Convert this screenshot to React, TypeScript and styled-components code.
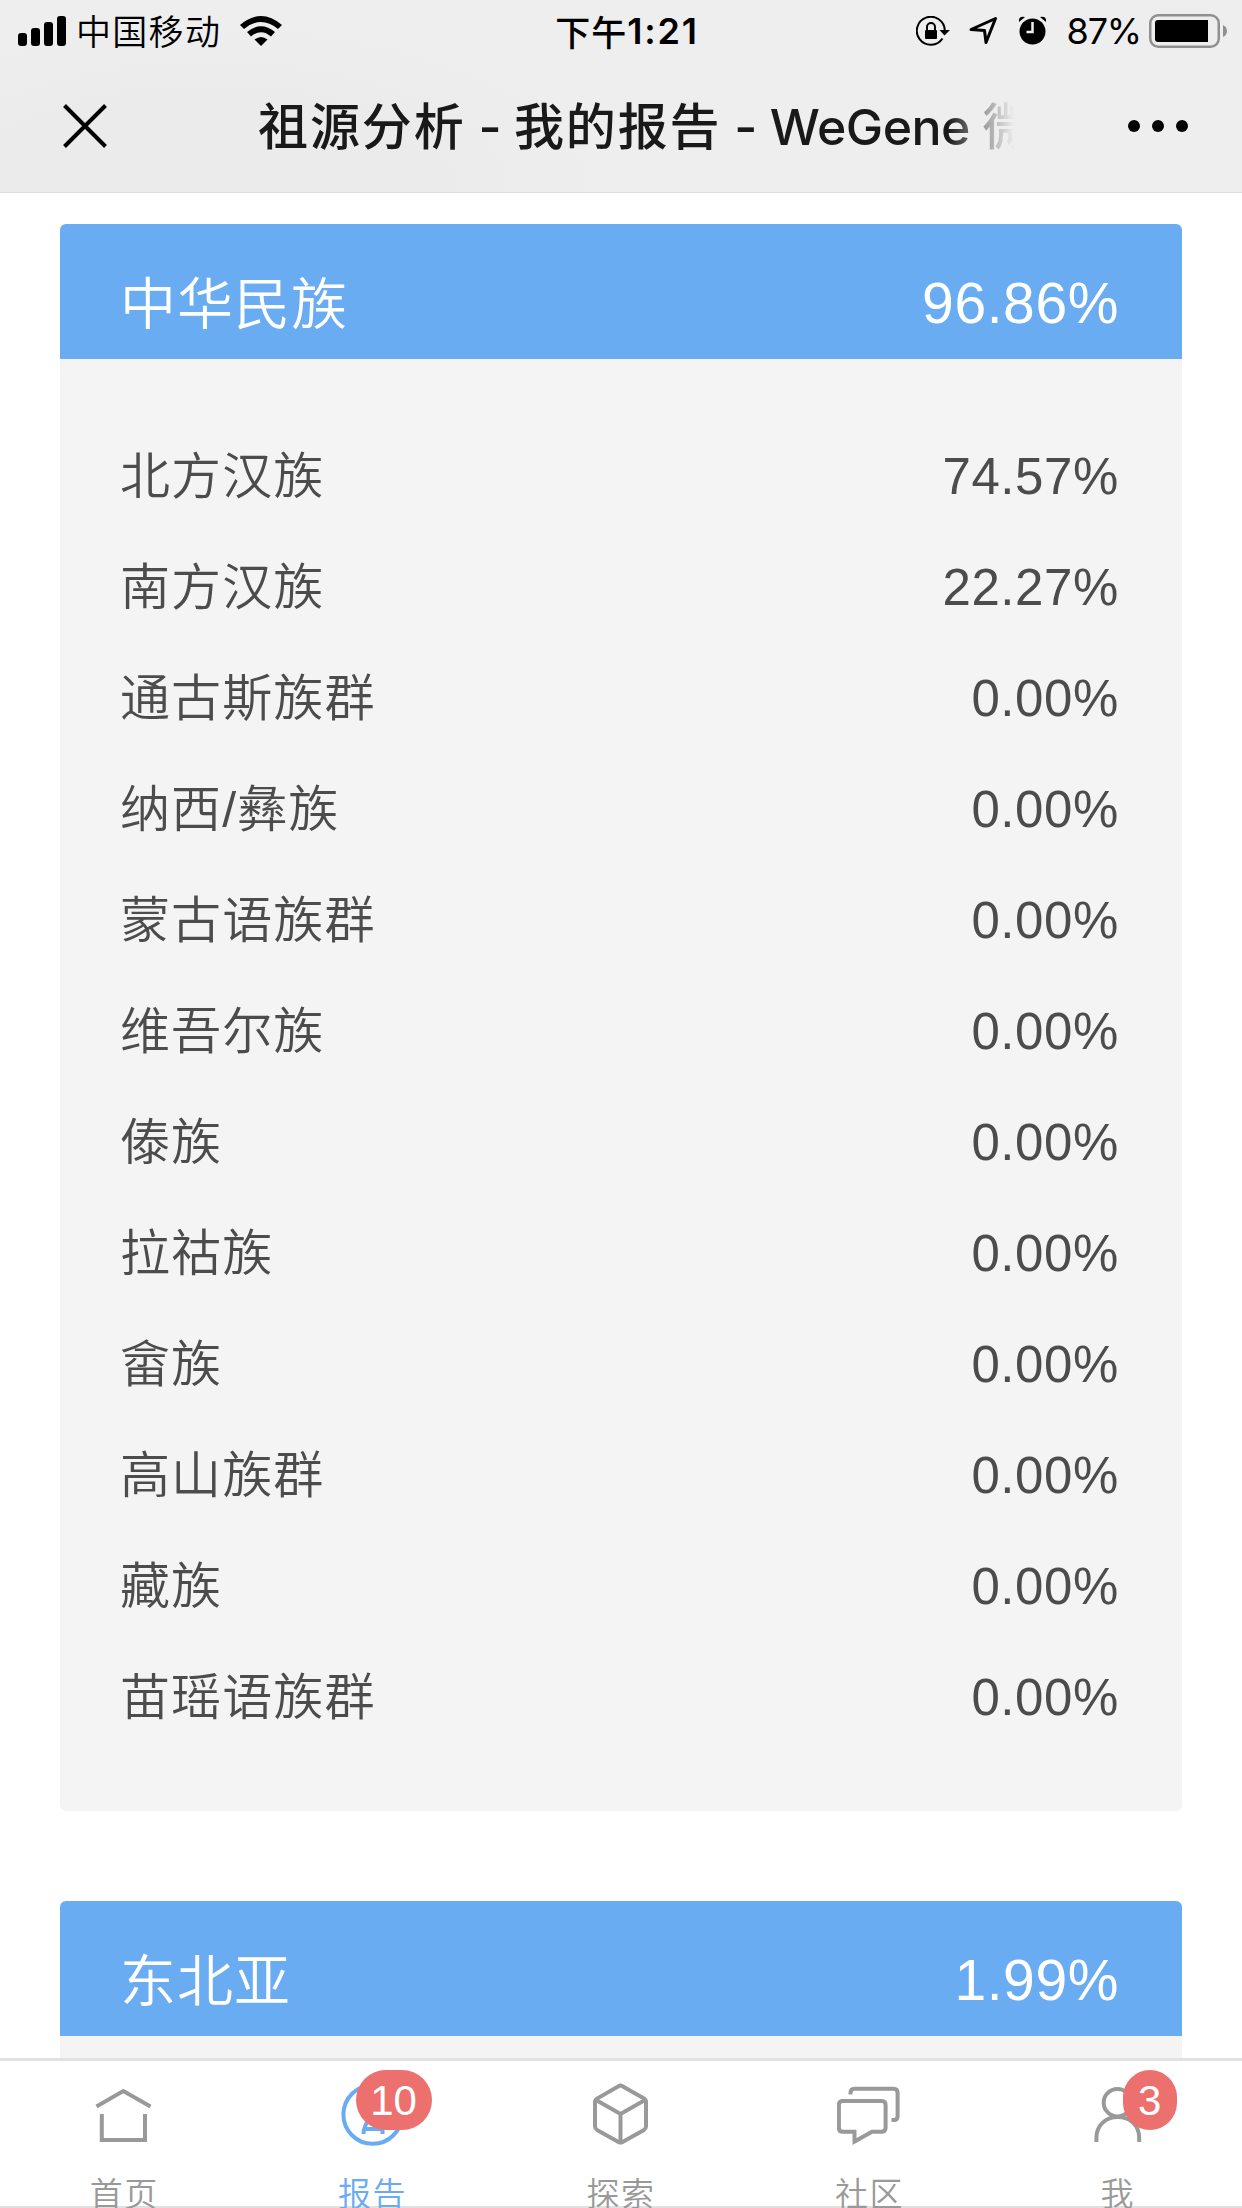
import React from 'react';
import styled, { createGlobalStyle } from 'styled-components';

const GlobalStyle = createGlobalStyle`
  * { box-sizing: border-box; }
  body { margin: 0; background: #fff; overflow: hidden; }
`;

const cjk = `'Noto Sans CJK SC', sans-serif`;

const Screen = styled.div`
  width: 1242px;
  height: 2208px;
  display: flex;
  flex-direction: column;
  overflow: hidden;
  background: #fff;
  font-family: 'Liberation Sans', ${cjk};
`;

const TopChrome = styled.header`
  flex: none;
  height: 193px;
  border-bottom: 1px solid #dedede;
  background: radial-gradient(ellipse 400px 170px at 210px 190px, #ebebeb 60%, #ecedec 80%, #eeeeee 100%);
`;

const StatusBar = styled.div`
  height: 60px;
  padding: 0 14px 0 18px;
  display: grid;
  grid-template-columns: 1fr auto 1fr;
  align-items: center;
  color: #000;
  font-family: Inter, ${cjk};
`;

const StatusGroup = styled.div<{ $end?: boolean }>`
  display: flex;
  align-items: center;
  justify-content: ${(p) => (p.$end ? 'flex-end' : 'flex-start')};
`;

const Carrier = styled.span`
  margin: -1px 19px 0 10px;
  font: 350 35px/60px ${cjk};
  letter-spacing: 1.3px;
`;

const Clock = styled.span`
  display: flex;
  margin-left: 8px;
  font: 600 36px/60px Inter, ${cjk};
  letter-spacing: 1.8px;
`;

const Meridiem = styled.span`
  font: 500 35px/60px ${cjk};
  letter-spacing: 1px;
`;

const BatteryText = styled.span`
  margin: 1px 8px 0 20px;
  font-size: 36px;
  line-height: 60px;
  letter-spacing: -1.2px;
`;

const StatusIcon = styled.svg<{ $gap?: number }>`
  display: block;
  flex: none;
  margin-left: ${(p) => p.$gap ?? 0}px;
`;

const NavBar = styled.div`
  height: 132px;
  padding: 0 54px 0 63px;
  display: flex;
  align-items: center;
`;

const Title = styled.h1`
  margin: -2px auto 0 151px;
  width: 756px;
  overflow: hidden;
  white-space: nowrap;
  color: #191919;
  font: 500 50px/132px Inter, ${cjk};
  letter-spacing: -0.5px;
  mask-image: linear-gradient(to right, #000 690px, rgba(0, 0, 0, 0.4) 725px, transparent 756px);
`;

const TitleRun = styled.span`
  font: 500 50px/132px ${cjk};
  letter-spacing: 1.9px;
`;

const Content = styled.main`
  flex: 1;
  min-height: 0;
  overflow: hidden;
  padding: 31px 60px 0;
  display: flex;
  flex-direction: column;
  gap: 90px;
`;

const Card = styled.section`
  flex: none;
  border-radius: 6px;
  overflow: hidden;
  background: #f4f4f4;
`;

const CardHeader = styled.div`
  height: 135px;
  padding: 24px 63px 0 60px;
  display: flex;
  justify-content: space-between;
  align-items: flex-start;
  background: #69acf1;
  color: #fff;
`;

const CardBody = styled.div`
  padding: 62px 63px 58px 60px;
`;

const Row = styled.div`
  height: 111px;
  display: flex;
  justify-content: space-between;
  align-items: flex-start;
  color: #4c4c4c;
`;

const Name = styled.span<{ $large?: boolean }>`
  margin-top: 1px;
  font-family: 'Liberation Sans', ${cjk};
  font-weight: 350;
  font-size: ${(p) => (p.$large ? 56 : 50)}px;
  line-height: 111px;
  letter-spacing: ${(p) => (p.$large ? 1 : 1.1)}px;
`;

const Percent = styled.span<{ $large?: boolean }>`
  font-size: ${(p) => (p.$large ? 57 : 51)}px;
  line-height: 111px;
  letter-spacing: 0.6px;
`;

const TabBar = styled.nav`
  flex: none;
  height: 150px;
  border-top: 3px solid #e0e1e3;
  background: linear-gradient(#e0e0e0, #e0e0e0) bottom / 100% 2px no-repeat #fff;
  display: grid;
  grid-template-columns: repeat(5, 1fr);
  overflow: hidden;
`;

const Tab = styled.a<{ $active?: boolean }>`
  display: flex;
  flex-direction: column;
  align-items: center;
  padding-top: 19px;
  color: ${(p) => (p.$active ? '#69acf1' : '#999999')};
`;

const IconBox = styled.span`
  position: relative;
  width: 64px;
  height: 68px;
`;

const TabIcon = styled.svg`
  display: block;
  fill: none;
  stroke: currentColor;
  stroke-width: 4;
`;

const Badge = styled.span<{ $wide?: boolean }>`
  position: absolute;
  top: -10px;
  left: ${(p) => (p.$wide ? 15 : 37)}px;
  width: ${(p) => (p.$wide ? 76 : 54)}px;
  height: 60px;
  border-radius: 30px;
  background: #ec706d;
  color: #fff;
  font-size: 42px;
  line-height: 61px;
  text-align: center;
`;

const TabLabel = styled.span`
  margin-top: 19px;
  font: 350 33px/50px ${cjk};
  letter-spacing: 1.5px;
  white-space: nowrap;
`;

type Entry = { name: string; value: string };

const groups: { title: string; total: string; rows: Entry[] }[] = [
  {
    title: '中华民族',
    total: '96.86%',
    rows: [
      { name: '北方汉族', value: '74.57%' },
      { name: '南方汉族', value: '22.27%' },
      { name: '通古斯族群', value: '0.00%' },
      { name: '纳西/彝族', value: '0.00%' },
      { name: '蒙古语族群', value: '0.00%' },
      { name: '维吾尔族', value: '0.00%' },
      { name: '傣族', value: '0.00%' },
      { name: '拉祜族', value: '0.00%' },
      { name: '畲族', value: '0.00%' },
      { name: '高山族群', value: '0.00%' },
      { name: '藏族', value: '0.00%' },
      { name: '苗瑶语族群', value: '0.00%' },
    ],
  },
  { title: '东北亚', total: '1.99%', rows: [] },
];

const tabs: { label: string; active?: boolean; badge?: string; icon: React.ReactNode }[] = [
  {
    label: '首页',
    icon: (
      <>
        <path d="M4.500 26.500 31.300 11 58.500 26.500" />
        <path d="M9.800 34V60H53V34" />
      </>
    ),
  },
  {
    label: '报告',
    active: true,
    badge: '10',
    icon: (
      <>
        <circle cx="31.700" cy="34.500" r="29.300" />
        <path d="M22.500 54C22.500 47 25 43 29 38L41.500 20V54M24 49H41" />
      </>
    ),
  },
  {
    label: '探索',
    icon: (
      <>
        <path
          strokeLinejoin="round"
          d="M29.500 6.200Q31.500 5 33.500 6.200L55 18.600Q57 19.800 57 22V46.500Q57 48.700 55 49.900L33.500 62Q31.500 63.200 29.500 62L8 49.900Q6 48.700 6 46.500V22Q6 19.800 8 18.600Z"
        />
        <path d="M7 20 31.500 34 56 20M31.500 34V62" />
      </>
    ),
  },
  {
    label: '社区',
    icon: (
      <>
        <path d="M13.500 14.500V13Q13.500 8.700 17.500 8.700H56.500Q60.600 8.700 60.600 13V36Q60.600 40 57 40H54.500" />
        <path d="M5.600 21H44.600Q48.600 21 48.600 25V47.700Q48.600 51.700 44.600 51.700H35L17.500 61.500V51.700H5.600Q1.900 51.700 1.900 47.700V25Q1.900 21 5.600 21Z" />
      </>
    ),
  },
  {
    label: '我',
    badge: '3',
    icon: (
      <>
        <circle cx="31.500" cy="22.700" r="13.800" />
        <path d="M10.400 62V58C10.400 45 20 37 31.800 37S53.200 45 53.200 58V62" />
      </>
    ),
  },
];

export default function App() {
  return (
    <Screen>
      <GlobalStyle />
      <TopChrome>
        <StatusBar>
          <StatusGroup>
            <StatusIcon width="48" height="30" viewBox="0 0 48 30">
              <rect x="0" y="17" width="9" height="13" rx="3" />
              <rect x="13" y="12" width="9" height="18" rx="3" />
              <rect x="26" y="6" width="9" height="24" rx="3" />
              <rect x="39" y="0" width="9" height="30" rx="3" />
            </StatusIcon>
            <Carrier>中国移动</Carrier>
            <StatusIcon width="42" height="30" viewBox="0 0 42 30">
              <path d="M0 9Q21-9 42 9L38 13Q21-1 4 13Z" />
              <path d="M7 16Q21 4.500 35 16L31 20.500Q21 12 11 20.500Z" />
              <path d="M14.500 23.500Q21 18.500 27.500 23.500L21 30Z" />
            </StatusIcon>
          </StatusGroup>
          <Clock>
            <Meridiem>下午</Meridiem>1:21
          </Clock>
          <StatusGroup $end>
            <StatusIcon width="34" height="30" viewBox="0 0 34 30" fill="none">
              <path d="M26.500 22.500A14 14 0 1 1 28.800 14.500" stroke="#000" strokeWidth="2" />
              <path d="M23.500 14H34L28.500 19.500Z" fill="#000" />
              <rect x="9" y="14" width="12" height="9" rx="1" fill="#000" />
              <path d="M11 15V11A4 4 0 0 1 19 11V15" stroke="#000" strokeWidth="2" />
            </StatusIcon>
            <StatusIcon $gap={19} width="29" height="29" viewBox="0 0 29 29" fill="none">
              <path d="M2 13.500 26.500 2.500 17 26.500 15.500 14.500Z" stroke="#000" strokeWidth="3" strokeLinejoin="round" />
            </StatusIcon>
            <StatusIcon $gap={20} width="29" height="29" viewBox="0 0 29 29">
              <circle cx="14.500" cy="15.500" r="13" />
              <path d="M1 6Q0 0 7 1Z" />
              <path d="M28 6Q29 0 22 1Z" />
              <path d="M14.500 6V16H8.500" fill="none" stroke="#eee" strokeWidth="2.500" />
            </StatusIcon>
            <BatteryText>87%</BatteryText>
            <StatusIcon width="79" height="34" viewBox="0 0 79 34">
              <rect x="1.250" y="1.250" width="68.500" height="31.500" rx="8" fill="none" stroke="#909090" strokeWidth="2.500" />
              <path d="M9 6H59V28H9Q6 28 6 25V9Q6 6 9 6Z" />
              <path d="M74 11Q78 13 78 17T74 23Z" fill="#909090" />
            </StatusIcon>
          </StatusGroup>
        </StatusBar>
        <NavBar>
          <StatusIcon width="44" height="44" viewBox="0 0 44 44">
            <path d="M1.500 1.500 42.500 42.500M42.500 1.500 1.500 42.500" stroke="#000" strokeWidth="4" />
          </StatusIcon>
          <Title>
            <TitleRun>祖源分析</TitleRun> - <TitleRun>我的报告</TitleRun> - WeGene <TitleRun>微</TitleRun>
          </Title>
          <StatusIcon width="60" height="12" viewBox="0 0 60 12">
            <circle cx="6" cy="6" r="6" />
            <circle cx="30" cy="6" r="6" />
            <circle cx="54" cy="6" r="6" />
          </StatusIcon>
        </NavBar>
      </TopChrome>
      <Content>
        {groups.map((group) => (
          <Card key={group.title}>
            <CardHeader>
              <Name $large>{group.title}</Name>
              <Percent $large>{group.total}</Percent>
            </CardHeader>
            <CardBody>
              {group.rows.map((row) => (
                <Row key={row.name}>
                  <Name>{row.name}</Name>
                  <Percent>{row.value}</Percent>
                </Row>
              ))}
            </CardBody>
          </Card>
        ))}
      </Content>
      <TabBar>
        {tabs.map((tab) => (
          <Tab key={tab.label} $active={tab.active}>
            <IconBox>
              <TabIcon width="64" height="68" viewBox="0 0 64 68">
                {tab.icon}
              </TabIcon>
              {tab.badge && <Badge $wide={tab.badge.length > 1}>{tab.badge}</Badge>}
            </IconBox>
            <TabLabel>{tab.label}</TabLabel>
          </Tab>
        ))}
      </TabBar>
    </Screen>
  );
}
